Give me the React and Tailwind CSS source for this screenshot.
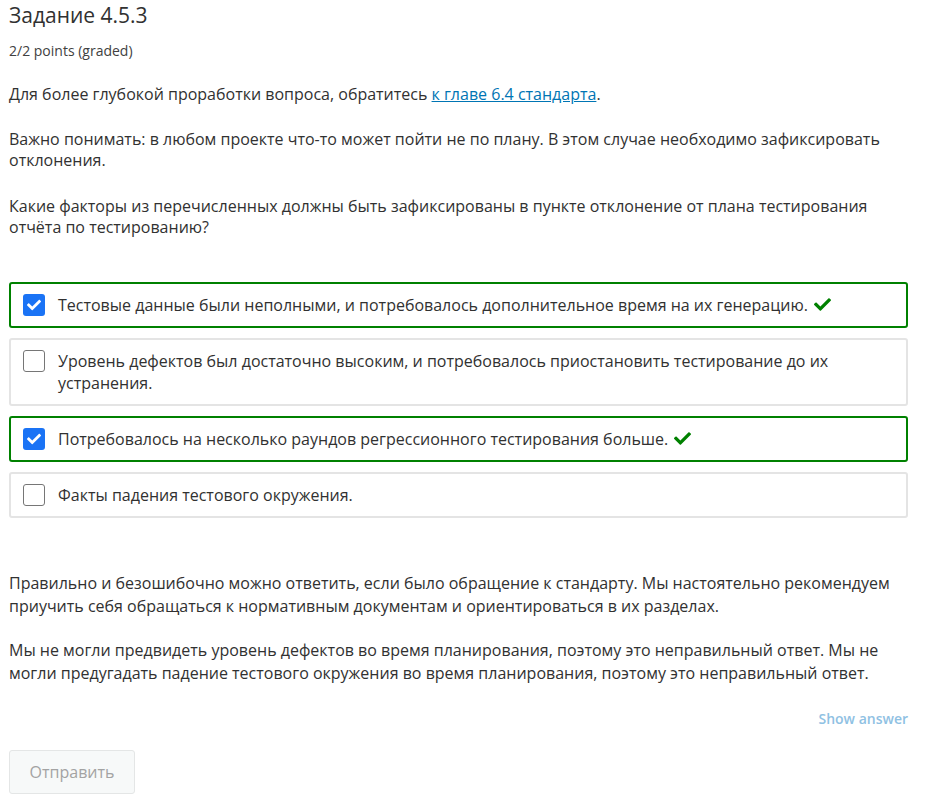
import React from 'react';

const font = { fontFamily: '"Open Sans", "Noto Sans", sans-serif' };

const FA_CHECK =
  'M173.898 439.404l-166.4-166.4c-9.997-9.997-9.997-26.206 0-36.204l36.203-36.204c9.997-9.998 26.207-9.998 36.204 0L192 312.69 432.095 72.596c9.997-9.997 26.207-9.997 36.204 0l36.203 36.204c9.997 9.997 9.997 26.206 0 36.204l-294.4 294.401c-9.998 9.997-26.207 9.997-36.204-.001z';

const options = [
  { text: 'Тестовые данные были неполными, и потребовалось дополнительное время на их генерацию.', checked: true },
  { text: 'Уровень дефектов был достаточно высоким, и потребовалось приостановить тестирование до их устранения.', checked: false },
  { text: 'Потребовалось на несколько раундов регрессионного тестирования больше.', checked: true },
  { text: 'Факты падения тестового окружения.', checked: false },
];

function Checkbox({ checked }) {
  if (checked) {
    return (
      <span className="flex h-[22px] w-[22px] shrink-0 items-center justify-center rounded-[3px] bg-[#1a73f5]">
        <svg viewBox="0 0 512 512" className="h-[14px] w-[14px]" fill="#fff">
          <path d={FA_CHECK} />
        </svg>
      </span>
    );
  }
  return <span className="h-[22px] w-[22px] shrink-0 rounded-[3px] border border-[#767676] bg-white" />;
}

function Option({ text, checked }) {
  return (
    <label
      className={
        'flex items-start gap-[13px] rounded-[3px] border-2 px-[12px] py-[10px] ' +
        (checked ? 'border-[#008100]' : 'border-[#e4e4e4]')
      }
    >
      <Checkbox checked={checked} />
      <span className="block text-[16px] leading-[22px] text-[#313131]">
        {text}
        {checked && (
          <svg viewBox="0 0 512 512" className="ml-[6px] inline-block h-[17px] w-[17px] align-[-2px]" fill="#008100">
            <path d={FA_CHECK} />
          </svg>
        )}
      </span>
    </label>
  );
}

export default function App() {
  return (
    <div className="min-h-screen bg-white pl-[9px] pr-[31px] pt-px text-[#313131]" style={font}>
      <h2 className="text-[21px] leading-[28px] font-normal text-[#313131]">Задание 4.5.3</h2>
      <div className="mt-[13px] text-[14px] leading-[18px] text-[#414141]">2/2 points (graded)</div>

      <p className="mt-[24px] text-[16px] leading-[21px]">
        Для более глубокой проработки вопроса, обратитесь{' '}
        <a href="#" className="text-[#0075b4] underline">к главе 6.4 стандарта</a>.
      </p>
      <p className="mt-[24px] text-[16px] leading-[21px]">
        Важно понимать: в любом проекте что-то может пойти не по плану. В этом случае необходимо зафиксировать отклонения.
      </p>
      <p className="mt-[25px] text-[16px] leading-[21px]">
        Какие факторы из перечисленных должны быть зафиксированы в пункте отклонение от плана тестирования отчёта по тестированию?
      </p>

      <div className="mt-[44px] flex flex-col gap-[10px]">
        {options.map((o, i) => (
          <Option key={i} {...o} />
        ))}
      </div>

      <p className="mt-[54px] text-[16px] leading-[23px]">
        Правильно и безошибочно можно ответить, если было обращение к стандарту. Мы настоятельно рекомендуем приучить себя обращаться к нормативным документам и ориентироваться в их разделах.
      </p>
      <p className="mt-[21px] text-[16px] leading-[23px]">
        Мы не могли предвидеть уровень дефектов во время планирования, поэтому это неправильный ответ. Мы не могли предугадать падение тестового окружения во время планирования, поэтому это неправильный ответ.
      </p>

      <div className="mt-[24px] flex justify-end">
        <button className="text-[14px] leading-[20px] font-semibold text-[#8fc1e3]">Show answer</button>
      </div>

      <button className="mt-[21px] h-[44px] w-[126px] rounded-[3px] border border-[#e4e6e6] bg-[#f7f9f9] text-[16px] text-[#a3a3a3]">
        Отправить
      </button>
    </div>
  );
}
